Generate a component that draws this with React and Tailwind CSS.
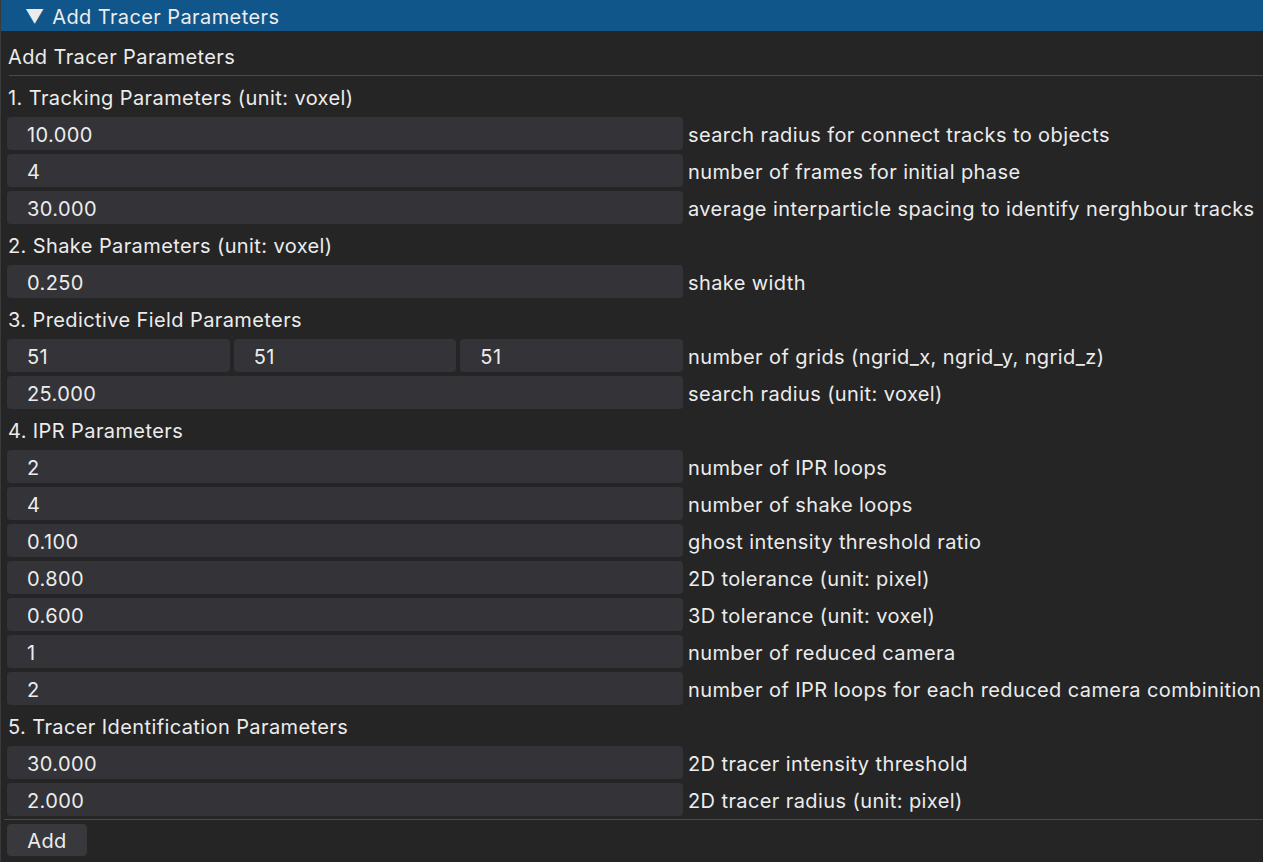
import React from 'react';

const sections = [
  {
    title: '1. Tracking Parameters (unit: voxel)',
    rows: [
      { values: ['10.000'], label: 'search radius for connect tracks to objects' },
      { values: ['4'], label: 'number of frames for initial phase' },
      { values: ['30.000'], label: 'average interparticle spacing to identify nerghbour tracks' },
    ],
  },
  {
    title: '2. Shake Parameters (unit: voxel)',
    rows: [{ values: ['0.250'], label: 'shake width' }],
  },
  {
    title: '3. Predictive Field Parameters',
    rows: [
      { values: ['51', '51', '51'], label: 'number of grids (ngrid_x, ngrid_y, ngrid_z)' },
      { values: ['25.000'], label: 'search radius (unit: voxel)' },
    ],
  },
  {
    title: '4. IPR Parameters',
    rows: [
      { values: ['2'], label: 'number of IPR loops' },
      { values: ['4'], label: 'number of shake loops' },
      { values: ['0.100'], label: 'ghost intensity threshold ratio' },
      { values: ['0.800'], label: '2D tolerance (unit: pixel)' },
      { values: ['0.600'], label: '3D tolerance (unit: voxel)' },
      { values: ['1'], label: 'number of reduced camera' },
      { values: ['2'], label: 'number of IPR loops for each reduced camera combinition' },
    ],
  },
  {
    title: '5. Tracer Identification Parameters',
    rows: [
      { values: ['30.000'], label: '2D tracer intensity threshold' },
      { values: ['2.000'], label: '2D tracer radius (unit: pixel)' },
    ],
  },
];

const InputRow = ({ values, label }) => (
  <div className="flex items-center h-[33px]">
    <div className="flex gap-[4px] w-[676px] shrink-0 h-full">
      {values.map((v, i) => (
        <div key={i} className="flex-1 bg-[#333338] rounded-[4px] flex items-center pl-[20px] pt-[2px]">
          {v}
        </div>
      ))}
    </div>
    <div className="pl-[5px] whitespace-nowrap pt-[2px]">{label}</div>
  </div>
);

export default function App() {
  return (
    <div
      className="w-[1263px] h-[862px] bg-[#252525] text-[#ececec] text-[20px] tracking-[0.4px] overflow-hidden border-l border-[#3a3a3a] flex flex-col"
      style={{ fontFamily: 'Inter, "Noto Sans", sans-serif' }}
    >
      {/* title bar */}
      <div className="h-[31px] bg-[#10568a] flex items-center pl-[24px] pt-[2px] shrink-0">
        <span className="text-[19px] mr-[8px] leading-none tracking-normal">▼</span>
        <span>Add Tracer Parameters</span>
      </div>

      <div className="flex flex-col pt-[8px]">
        <div className="h-[33px] flex items-center pl-[7px] pt-[2px]">Add Tracer Parameters</div>
        <div className="h-[1px] bg-[#4a4a4a] mt-[3px] ml-[8px]" />
        <div className="flex flex-col gap-[4px] pl-[6px] mt-[4px]">
          {sections.map((s) => (
            <React.Fragment key={s.title}>
              <div className="h-[33px] flex items-center pl-[1px] pt-[2px]">{s.title}</div>
              {s.rows.map((r) => (
                <InputRow key={r.label} {...r} />
              ))}
            </React.Fragment>
          ))}
        </div>
        <div className="h-[1px] bg-[#4a4a4a] mt-[3px] ml-[3px]" />
        <div className="pl-[6px] mt-[4px]">
          <div className="w-[80px] h-[32px] bg-[#38383d] rounded-[4px] flex items-center justify-center pt-[2px]">
            Add
          </div>
        </div>
      </div>
    </div>
  );
}
